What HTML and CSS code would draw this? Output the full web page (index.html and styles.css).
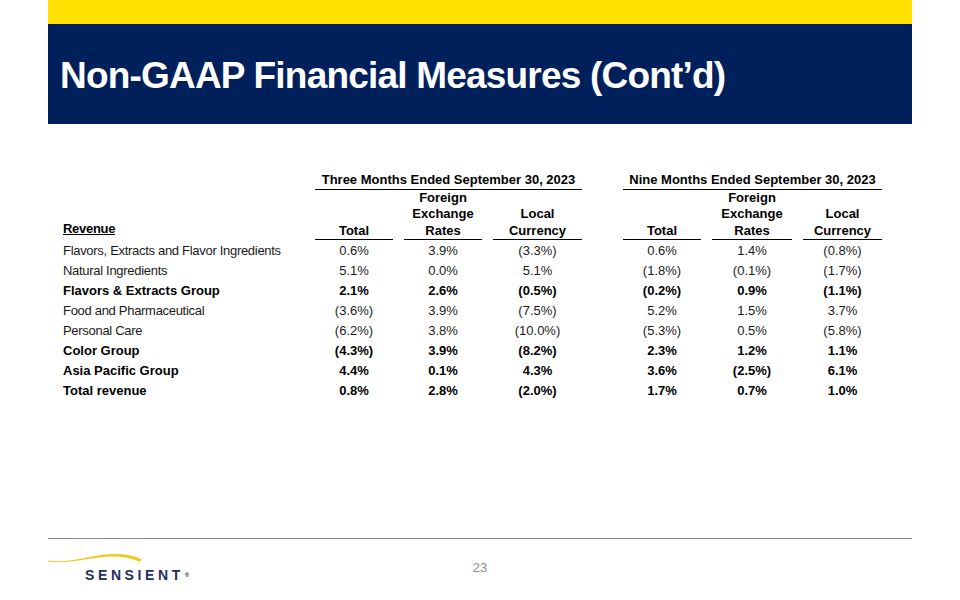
FILE: index.html
```html
<!DOCTYPE html>
<html>
<head>
<meta charset="utf-8">
<link rel="stylesheet" href="styles.css">
</head>
<body>
<div class="slide">
  <header class="head">
    <div class="stripe"></div>
    <div class="banner"><h1 class="title">Non-GAAP Financial Measures (Cont’d)</h1></div>
  </header>
  <main class="content">
    <div class="grid">
      <div></div>
      <div class="hcell span3">Three Months Ended September 30, 2023</div>
      <div></div>
      <div class="hcell span3">Nine Months Ended September 30, 2023</div>

      <div class="lab hlab"><span class="ul">Revenue</span></div>
      <div class="hcell sub">Total</div>
      <div class="hcell sub">Foreign<br>Exchange<br>Rates</div>
      <div class="hcell sub">Local<br>Currency</div>
      <div></div>
      <div class="hcell sub">Total</div>
      <div class="hcell sub">Foreign<br>Exchange<br>Rates</div>
      <div class="hcell sub">Local<br>Currency</div>

      <div class="lab first">Flavors, Extracts and Flavor Ingredients</div>
      <div class="num first">0.6%</div><div class="num first">3.9%</div><div class="num first">(3.3%)</div><div class="first"></div>
      <div class="num first">0.6%</div><div class="num first">1.4%</div><div class="num first">(0.8%)</div>

      <div class="lab">Natural Ingredients</div>
      <div class="num">5.1%</div><div class="num">0.0%</div><div class="num">5.1%</div><div></div>
      <div class="num">(1.8%)</div><div class="num">(0.1%)</div><div class="num">(1.7%)</div>

      <div class="lab b">Flavors &amp; Extracts Group</div>
      <div class="num b">2.1%</div><div class="num b">2.6%</div><div class="num b">(0.5%)</div><div></div>
      <div class="num b">(0.2%)</div><div class="num b">0.9%</div><div class="num b">(1.1%)</div>

      <div class="lab">Food and Pharmaceutical</div>
      <div class="num">(3.6%)</div><div class="num">3.9%</div><div class="num">(7.5%)</div><div></div>
      <div class="num">5.2%</div><div class="num">1.5%</div><div class="num">3.7%</div>

      <div class="lab">Personal Care</div>
      <div class="num">(6.2%)</div><div class="num">3.8%</div><div class="num">(10.0%)</div><div></div>
      <div class="num">(5.3%)</div><div class="num">0.5%</div><div class="num">(5.8%)</div>

      <div class="lab b">Color Group</div>
      <div class="num b">(4.3%)</div><div class="num b">3.9%</div><div class="num b">(8.2%)</div><div></div>
      <div class="num b">2.3%</div><div class="num b">1.2%</div><div class="num b">1.1%</div>

      <div class="lab b">Asia Pacific Group</div>
      <div class="num b">4.4%</div><div class="num b">0.1%</div><div class="num b">4.3%</div><div></div>
      <div class="num b">3.6%</div><div class="num b">(2.5%)</div><div class="num b">6.1%</div>

      <div class="lab b">Total revenue</div>
      <div class="num b">0.8%</div><div class="num b">2.8%</div><div class="num b">(2.0%)</div><div></div>
      <div class="num b">1.7%</div><div class="num b">0.7%</div><div class="num b">1.0%</div>
    </div>
  </main>
  <footer class="foot">
    <div class="logo">
      <svg class="swoosh" width="100" height="14" viewBox="0 0 100 14">
        <path d="M0 8.5 C 14 11, 30 7, 50 3.5 C 66 0.8, 82 1.5, 94 7.5 L 92 9.8 C 80 4.5, 66 3.5, 50 5.5 C 30 8.5, 14 11.5, 0 9.5 Z" fill="#f2c81e"/>
      </svg>
      <div class="brand">SENSIENT<span class="reg">®</span></div>
    </div>
    <div class="page">23</div>
    <div></div>
  </footer>
</div>
</body>
</html>
```
FILE: styles.css
```css
html, body {
  margin: 0;
  padding: 0;
  background: #fff;
}
.slide {
  width: 960px;
  height: 600px;
  display: flex;
  flex-direction: column;
  font-family: "Liberation Sans", Arial, sans-serif;
  overflow: hidden;
}
.head {
  margin: 0 48px;
}
.stripe {
  height: 24px;
  background: #ffe000;
}
.banner {
  height: 100px;
  background: #00205b;
  display: flex;
  align-items: flex-start;
}
.title {
  margin: 0;
  padding: 30px 0 0 12px;
  color: #fff;
  font-size: 37px;
  font-weight: bold;
  line-height: 44px;
  letter-spacing: -0.8px;
}
.content {
  padding: 48px 0 0 63px;
}
.grid {
  display: grid;
  grid-template-columns: 241px 78px 78px 89px 19px 78px 80px 79px;
  column-gap: 11px;
  font-size: 13px;
  color: #1a1a1a;
}
.hcell {
  font-weight: bold;
  color: #000;
  text-align: center;
  line-height: 16.5px;
  border-bottom: 1px solid #000;
}
.span3 {
  grid-column: span 3;
}
.sub {
  align-self: end;
}
.hlab {
  align-self: end;
  font-weight: bold;
  color: #000;
  line-height: 16.5px;
  padding-bottom: 1px;
  letter-spacing: 0;
}
.ul {
  text-decoration: underline;
}
.lab {
  line-height: 20px;
  letter-spacing: -0.3px;
}
.num {
  text-align: center;
  line-height: 20px;
}
.first {
  margin-top: 1px;
}
.b {
  font-weight: bold;
  color: #000;
  letter-spacing: 0;
}
.foot {
  margin: auto 48px 0;
  height: 61px;
  border-top: 1px solid #8a8a8a;
  display: grid;
  grid-template-columns: 1fr auto 1fr;
}
.logo {
  padding-top: 13px;
  display: flex;
  flex-direction: column;
}
.swoosh {
  display: block;
}
.brand {
  margin: 2px 0 0 37px;
  color: #262d5e;
  font-size: 14px;
  font-weight: bold;
  letter-spacing: 3.6px;
  line-height: 14px;
}
.reg {
  font-size: 6px;
  letter-spacing: 0;
  vertical-align: top;
  margin-left: 1px;
}
.page {
  padding-top: 21px;
  color: #8c8c8c;
  font-size: 13px;
  line-height: 16px;
}
```
